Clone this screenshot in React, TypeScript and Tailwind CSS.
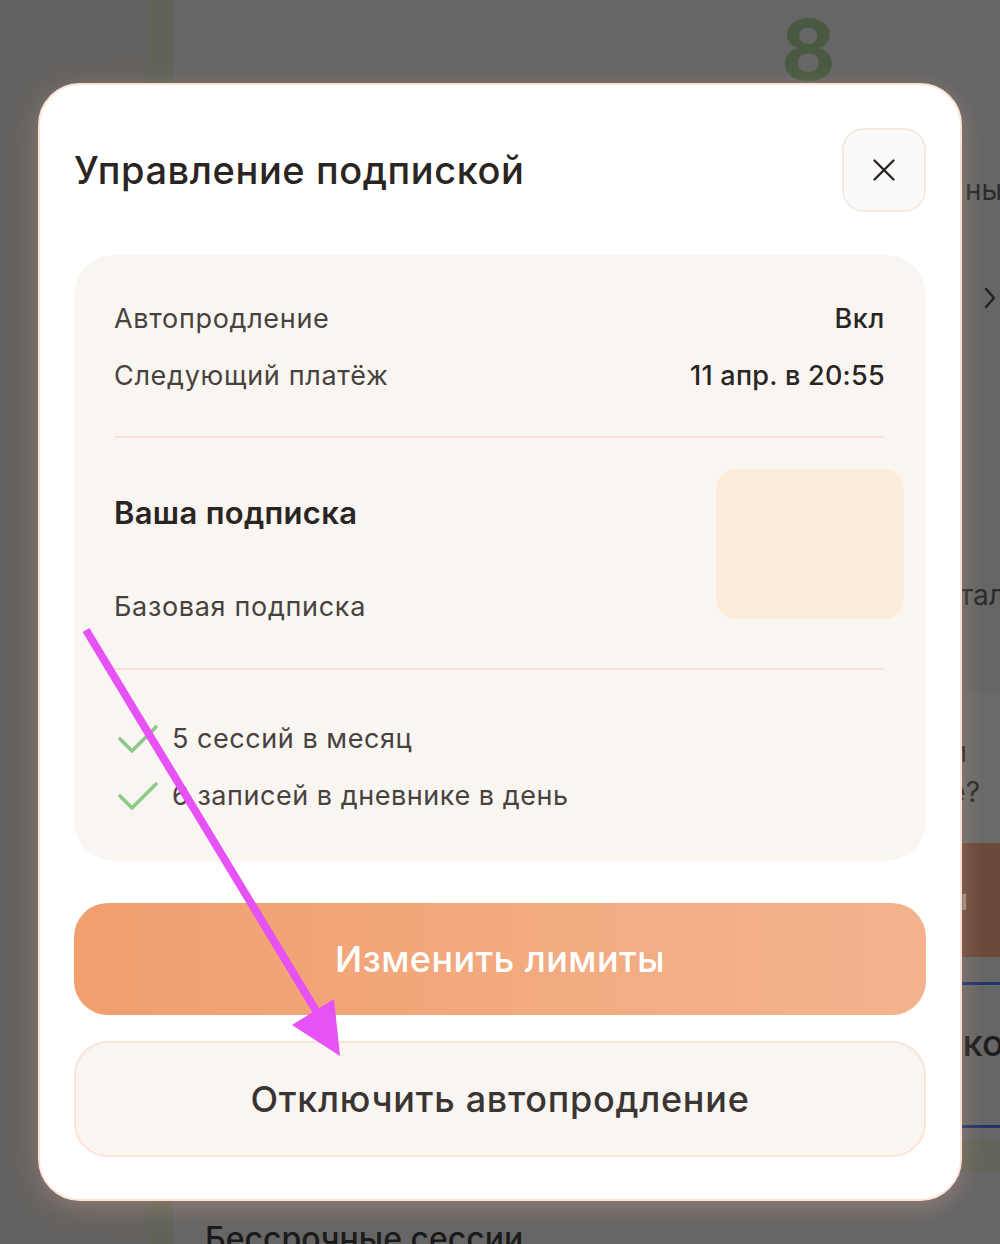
import React from "react";

function Check() {
  return (
    <svg width="42" height="32" viewBox="0 0 42 32" fill="none" className="shrink-0">
      <path d="M3 16 L15 28 L39 4" stroke="#8cc88a" strokeWidth="3.6" strokeLinecap="round" strokeLinejoin="round" />
    </svg>
  );
}

function Background() {
  return (
    <div className="flex h-[1244px] w-[1000px]">
      <div className="w-[148px] shrink-0 bg-[#646260]" />
      <div className="w-[25px] shrink-0 bg-[#61635a]" />
      <div className="flex w-[827px] shrink-0 flex-col overflow-hidden bg-[#666666] text-[#2b2b2b]">
        <div className="h-[100px] shrink-0 pl-[608px] text-[84px] font-bold leading-[100px] text-[#4a5a42]">8</div>
        <div className="h-[60px] shrink-0" />
        <div className="h-[60px] shrink-0 whitespace-nowrap pl-[792px] text-[28px] leading-[60px]">ные сессии</div>
        <div className="h-[50px] shrink-0" />
        <div className="flex h-[55px] shrink-0 items-center pl-[810px]">
          <svg width="14" height="24" viewBox="0 0 14 24" fill="none">
            <path d="M3 3 L11 12 L3 21" stroke="#222" strokeWidth="2.4" strokeLinecap="round" strokeLinejoin="round" />
          </svg>
        </div>
        <div className="h-[240px] shrink-0" />
        <div className="h-[60px] shrink-0 whitespace-nowrap pl-[787px] text-[28px] leading-[60px]">тальнее</div>
        <div className="h-[69px] shrink-0" />
        <div className="flex h-[149px] shrink-0 flex-col bg-[#6a6a6a] pt-[38px] text-[28px] leading-[40px]">
          <div className="whitespace-nowrap pr-[33px] text-right">Есть вопросы и</div>
          <div className="whitespace-nowrap pr-[20px] text-right">предложение?</div>
        </div>
        <div className="flex h-[114px] shrink-0 items-center justify-end whitespace-nowrap bg-[#6a4b3b] pr-[32px] text-[28px] font-semibold text-[#9a8a82]">
          Выбрать тарифы
        </div>
        <div className="h-[25px] shrink-0" />
        <div className="h-[3px] shrink-0 bg-[#22346c]" />
        <div className="h-[140px] shrink-0 whitespace-nowrap pl-[669px] text-[36px] font-medium leading-[116px] text-[#1e1e1e]">
          Промокоды
        </div>
        <div className="h-[3px] shrink-0 bg-[#22346c]" />
        <div className="h-[12px] shrink-0" />
        <div className="h-[32px] shrink-0 bg-[#62645a]" />
        <div className="h-[72px] shrink-0 whitespace-nowrap pl-[32px] pt-[47px] text-[32px] font-medium leading-[40px] text-[#1a1a1a]">
          Бессрочные сессии
        </div>
      </div>
    </div>
  );
}

export default function App() {
  return (
    <div className="relative h-[1244px] w-[1000px] overflow-hidden bg-[#666666] font-['Inter',sans-serif]">
      <Background />

      <div className="absolute left-[38px] top-[83px] w-[924px] rounded-[42px] border-2 border-[#fde2d6] bg-white px-[34px] pb-[42px] pt-[43px] shadow-[0_6px_24px_rgba(255,190,160,0.28)]">
        <div className="flex h-[84px] items-center justify-between">
          <div className="text-[38px] font-medium leading-none tracking-[0.015em] text-[#2a2522]">Управление подпиской</div>
          <div className="flex h-[84px] w-[84px] items-center justify-center rounded-[22px] border-2 border-[#f6e9e0] bg-[#fcfaf8]">
            <svg width="22" height="22" viewBox="0 0 22 22" fill="none">
              <path d="M1.5 1.5 L20.5 20.5 M20.5 1.5 L1.5 20.5" stroke="#2a2522" strokeWidth="2.4" strokeLinecap="round" />
            </svg>
          </div>
        </div>

        <div className="mt-[43px] rounded-[40px] bg-[#f9f6f2] pb-[47px] pl-[40px] pr-[41px] pt-[46px] text-[27px] tracking-[0.025em]">
          <div className="flex h-[36px] items-center justify-between leading-[36px]">
            <span className="text-[#48423e]">Автопродление</span>
            <span className="font-medium text-[#2a2522]">Вкл</span>
          </div>
          <div className="mt-[21px] flex h-[36px] items-center justify-between leading-[36px]">
            <span className="text-[#48423e]">Следующий платёж</span>
            <span className="font-medium tracking-[0.01em] text-[#2a2522]">11 апр. в 20:55</span>
          </div>
          <div className="mt-[42px] h-[2px] bg-[#fbe3d9]" />

          <div className="mt-[31px] flex h-[150px] items-start justify-between">
            <div className="flex h-[150px] flex-col">
              <div className="mt-[24px] text-[31px] font-semibold leading-[40px] tracking-[0.01em] text-[#2a2522]">Ваша подписка</div>
              <div className="mt-[56px] leading-[36px] text-[#48423e]">Базовая подписка</div>
            </div>
            <div className="mr-[-19px] h-[150px] w-[188px] rounded-[20px] bg-[#fcecd9]" />
          </div>

          <div className="mt-[49px] h-[2px] bg-[#fbe3d9]" />

          <div className="mt-[51px] flex flex-col gap-[21px]">
            <div className="flex h-[36px] items-center gap-[13px] pl-[3px]">
              <Check />
              <span className="leading-[36px] tracking-[0.02em] text-[#48423e]">5 сессий в месяц</span>
            </div>
            <div className="flex h-[36px] items-center gap-[13px] pl-[3px]">
              <Check />
              <span className="leading-[36px] tracking-[0.02em] text-[#48423e]">6 записей в дневнике в день</span>
            </div>
          </div>
        </div>

        <div className="mt-[42px] flex h-[112px] items-center justify-center rounded-[34px] bg-gradient-to-r from-[#f09f6e] to-[#f4b38e] text-[36px] font-medium tracking-[0.012em] text-white">
          Изменить лимиты
        </div>
        <div className="mt-[26px] flex h-[116px] items-center justify-center rounded-[34px] border-2 border-[#fbe3d8] bg-[#f9f6f2] text-[36px] font-medium tracking-[0.02em] text-[#3a3533]">
          Отключить автопродление
        </div>
      </div>

      <svg className="pointer-events-none absolute left-0 top-0" width="1000" height="1244" viewBox="0 0 1000 1244" fill="none">
        <line x1="86" y1="630" x2="318" y2="1014" stroke="#e652f5" strokeWidth="8" />
        <polygon points="292,1025 334,999 340,1056" fill="#e652f5" />
      </svg>
    </div>
  );
}
